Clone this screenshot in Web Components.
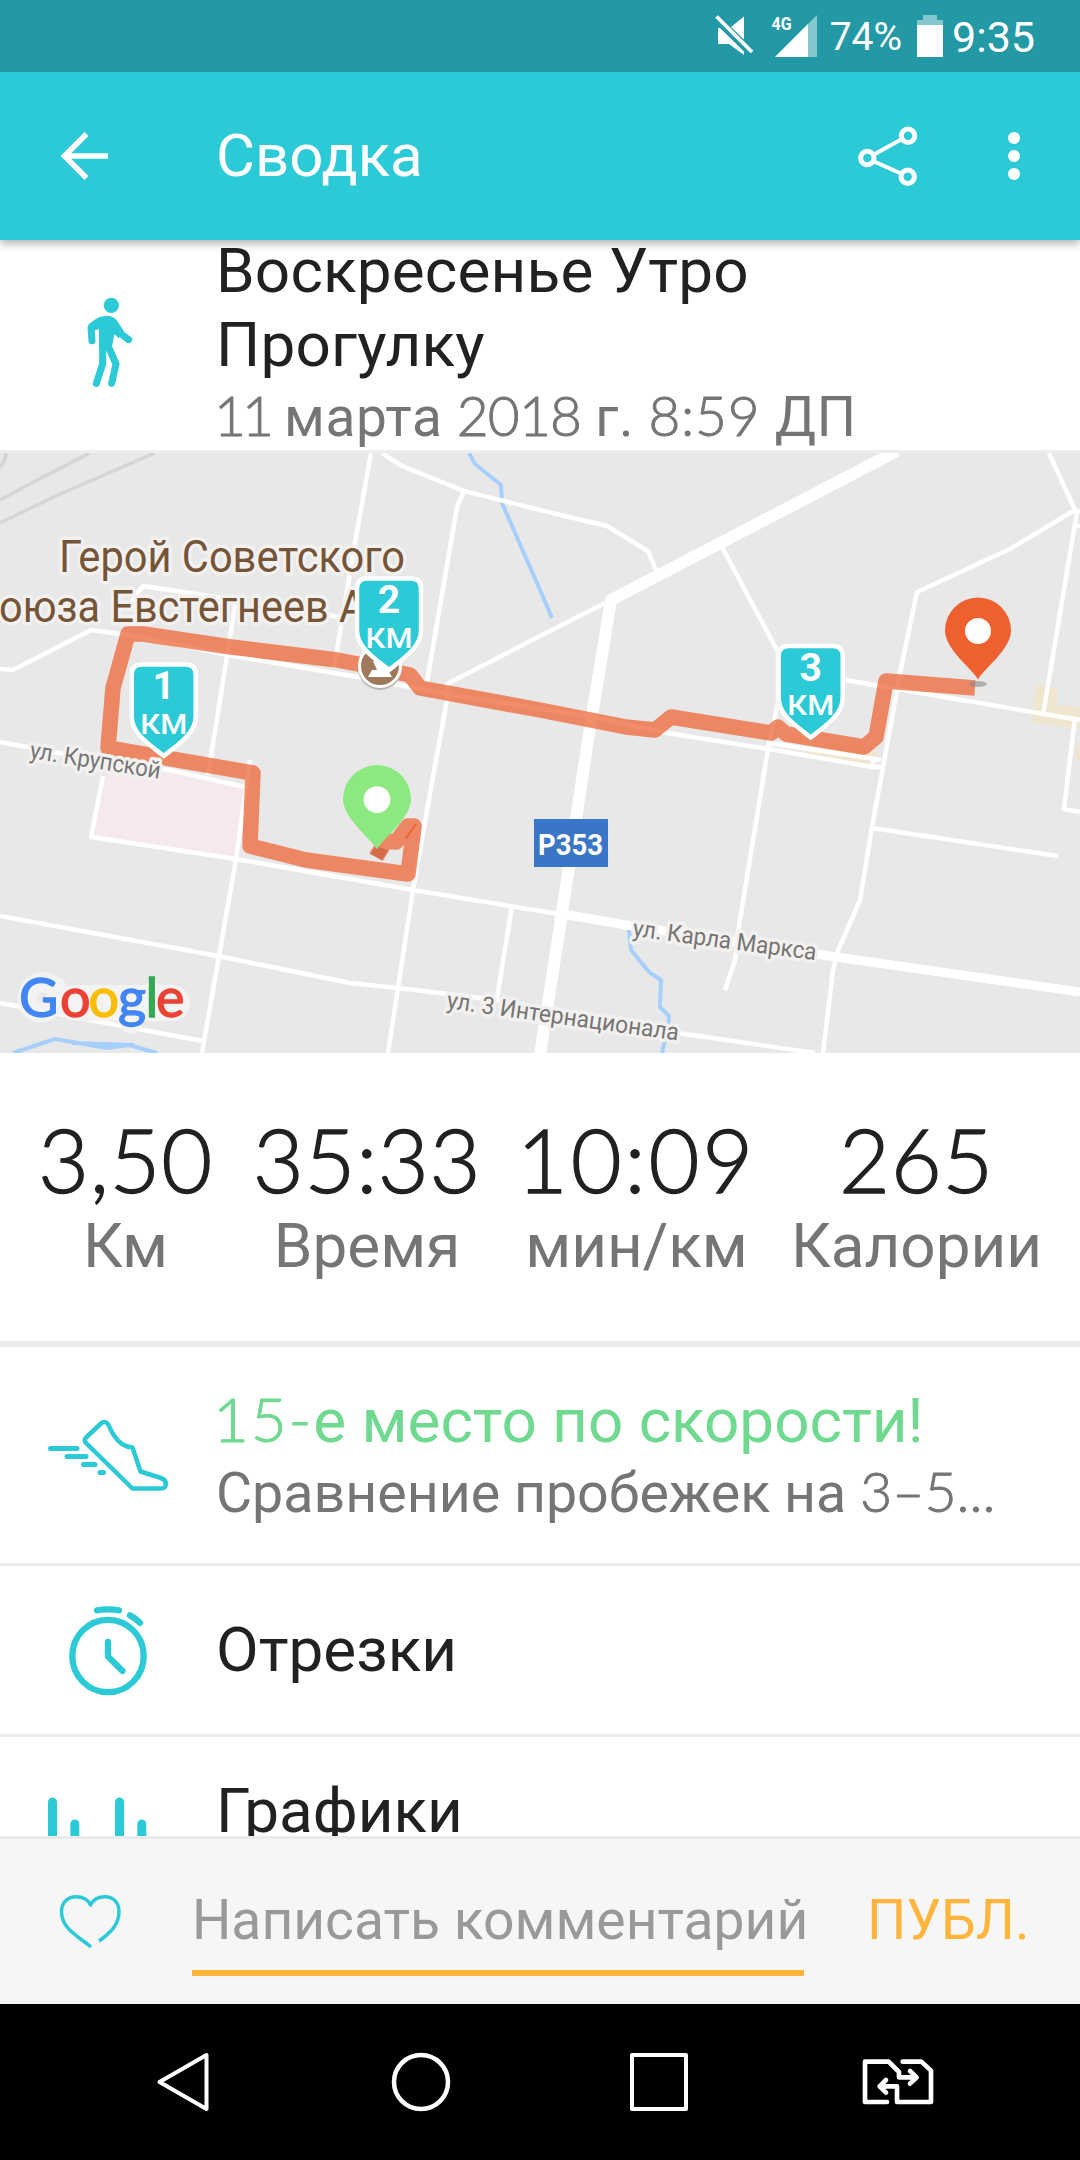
<!DOCTYPE html>
<html lang="ru">
<head>
<meta charset="utf-8">
<title>Сводка</title>
<style>
  body {
    margin: 0;
    width: 1080px;
    height: 2160px;
    overflow: hidden;
    background: white;
    font-family: Roboto, "Noto Sans", sans-serif;
    color: #212121;
  }

  .num {
    font-family: Lato, sans-serif;
    font-weight: 300;
    -webkit-text-stroke: 0.9px currentColor;
  }
</style>
</head>
<body>

<run-screen>
  <status-bar slot="top"></status-bar>
  <app-bar slot="top">Сводка</app-bar>

  <activity-header>
    <span slot="title">Воскресенье Утро Прогулку</span>
    <span slot="date"><span class="num" style="letter-spacing:-4px">11</span> марта <span class="num" style="letter-spacing:-.8px">2018</span> г. <span class="num" style="letter-spacing:.8px">8:59</span> ДП</span>
  </activity-header>
  <route-map></route-map>
  <stats-row>
    <stat-item value="3,50">Км</stat-item>
    <stat-item value="35:33">Время</stat-item>
    <stat-item value="10:09" style="--value-spacing:2.8px">мин/км</stat-item>
    <stat-item value="265">Калории</stat-item>
  </stats-row>

  <list-row icon="shoe" tall accent>
    <span class="num" style="margin-left:-3px;letter-spacing:1.8px">15-</span>е место по скорости!
    <span slot="sub">Сравнение пробежек на <span class="num">3–5...</span></span>
  </list-row>
  <list-row icon="clock">Отрезки</list-row>
  <list-row icon="bars" class="last">Графики</list-row>

  <comment-bar slot="bottom" action="ПУБЛ.">Написать комментарий</comment-bar>
  <nav-bar slot="bottom"></nav-bar>
</run-screen>

<script>
class BaseElement extends HTMLElement {
  constructor() {
    super()
    this.attachShadow({ mode: "open" })
  }

  connectedCallback() {
    this.shadowRoot.innerHTML = this.render()
  }
}

const icons = {
  shoe: /*html*/`
    <svg width="128" height="82" viewBox="0 -4 128 82" fill="none" stroke="#2cc9d6" stroke-width="4.500" stroke-linecap="round" stroke-linejoin="round">
      <path d="M57 5.500 L42 19.500 Q39.500 22 42 25 L88.500 70.500 H117 Q122 70.500 121.800 65.500 Q121.500 61.500 117 60 L96.500 53.500 L88.500 29.500 C79 29 73.500 23 70 17.500 C66 11.500 66 9 63.500 5.500 Q60.500 2.500 57 5.500 Z"/>
      <path d="M6.500 30.500 H33 M23 38.500 H42 M39.500 46.500 H51 M56 54.500 H59.500" stroke-width="5"/>
    </svg>`,
  clock: /*html*/`
    <svg width="80" height="92" viewBox="0 0 80 92" fill="none" stroke="#2cc9d6" stroke-width="6.300" stroke-linecap="round" stroke-linejoin="round">
      <ellipse cx="40" cy="52" rx="35.700" ry="36.200"/>
      <path d="M40 38 V52.500 L54.500 67"/>
      <path d="M29 6.300 Q40 4.600 51 6.300 M62 11.300 Q67.500 14 72 18.800"/>
    </svg>`,
  bars: /*html*/`
    <svg width="120" height="50" viewBox="0 0 120 50" stroke="#2cc9d6" stroke-width="9" stroke-linecap="round">
      <path d="M4.500 6 V44 M26.800 28 V44 M71.500 6 V44 M93.800 28 V44"/>
    </svg>`
}

class RunScreen extends BaseElement {
  render() {
    return /*html*/`
      <style>
        :host {
          display: flex;
          flex-direction: column;
          height: 2160px;
        }
        main {
          flex: 1;
          min-height: 0;
          overflow: hidden;
        }
      </style>
      <slot name="top"></slot>
      <main><slot></slot></main>
      <slot name="bottom"></slot>`
  }
}

class StatusBar extends BaseElement {
  render() {
    return /*html*/`
      <style>
        :host {
          display: flex;
          justify-content: flex-end;
          height: 72px;
          box-sizing: border-box;
          padding-right: 45px;
          background: #2499a6;
          color: white;
          line-height: 72px;
          font-size: 43px;
          z-index: 3;
        }
        .battery {
          font-size: 39px;
          margin: 1px 15px 0 11px;
        }
        .time {
          margin-left: 9px;
          line-height: 74px;
        }
      </style>
      <svg width="106" height="72" viewBox="714 0 106 72" fill="white">
        <path d="M732 27 L745 16.500 V39.500 Z M719 28 H721 L745 51.500 V55 L730 44 H719 Z"/>
        <path d="M717.500 16.500 L753 52" stroke="white" stroke-width="3.800"/>
        <path d="M776 57 L818 15 V57 Z" opacity="0.450"/>
        <path d="M776 57 L809 24 V57 Z"/>
        <text x="772.500" y="30" font-size="18" font-weight="700" textLength="20" lengthAdjust="spacingAndGlyphs">4G</text>
      </svg>
      <span class="battery">74%</span>
      <svg width="26" height="72" viewBox="917 0 26 72" fill="white">
        <path d="M917 25 V20 H923 V15 H937 V20 H943 V25 Z" opacity="0.450"/>
        <rect x="917" y="25" width="26" height="32"/>
      </svg>
      <span class="time">9:35</span>`
  }
}

class AppBar extends BaseElement {
  render() {
    return /*html*/`
      <style>
        :host {
          display: flex;
          align-items: center;
          height: 168px;
          background: #2cc9d6;
          color: white;
          font-size: 60px;
          box-shadow: 0 3px 9px rgba(0, 0, 0, 0.35);
          z-index: 2;
        }
        .back {
          margin-left: 58px;
          width: 156px;
        }
        .label {
          flex: 1;
          padding: 0 0 2px 2px;
        }
        .dots {
          margin: 0 59px 0 90px;
        }
      </style>
      <svg class="back" width="156" height="54" viewBox="0 0 156 54" fill="none" stroke="white" stroke-width="5.500">
        <path d="M50 27 H6 M28.500 5 L6.500 27 L28.500 49"/>
      </svg>
      <span class="label"><slot></slot></span>
      <svg width="60" height="62" viewBox="857 125 60 62" fill="none" stroke="white" stroke-width="5">
        <circle cx="908" cy="135.700" r="6.700"/>
        <circle cx="867.300" cy="158" r="6.700"/>
        <circle cx="907.700" cy="176.700" r="6.700"/>
        <path d="M873 155 L902 139 M873 161 L902 174" stroke-width="4"/>
      </svg>
      <svg class="dots" width="14" height="50" viewBox="0 0 14 50" fill="white">
        <circle cx="7" cy="7" r="6"/>
        <circle cx="7" cy="25" r="6"/>
        <circle cx="7" cy="43" r="6"/>
      </svg>`
  }
}

class ActivityHeader extends BaseElement {
  render() {
    return /*html*/`
      <style>
        :host {
          display: flex;
          height: 210px;
          border-bottom: 3px solid #eeeeee;
        }
        .icon {
          box-sizing: border-box;
          width: 216px;
          flex: none;
          display: flex;
          align-items: center;
          justify-content: center;
          padding: 0 0 10px 3px;
        }
        .text {
          margin-top: -6px;
        }
        .title {
          width: 640px;
          font-size: 62px;
          line-height: 74px;
          letter-spacing: 0.2px;
        }
        .date {
          margin: -1px 0 0 -2px;
          font-size: 55px;
          line-height: 68px;
          letter-spacing: 0.6px;
          color: #757575;
          white-space: nowrap;
        }
      </style>
      <div class="icon">
        <svg width="100" height="120" viewBox="0 0 300 360" fill="none" stroke="#2cc9d6" stroke-width="21" stroke-linecap="round" stroke-linejoin="round">
          <circle cx="154" cy="76" r="23" fill="#2cc9d6" stroke="none"/>
          <path d="M84 135 Q112 108 140 107 C158 107 170 116 178 133 L192 154 L176 175 L163 163 L155 205 H117 V148 L100 152 Z" fill="#2cc9d6" stroke="none"/>
          <path d="M96 182 L93 143 L120 122 M206 179 L176 156 M128 200 V252 L109 310 M143 195 L168 252 L155 310"/>
        </svg>
      </div>
      <div class="text">
        <div class="title"><slot name="title"></slot></div>
        <div class="date"><slot name="date"></slot></div>
      </div>`
  }
}

class RouteMap extends BaseElement {
  shield(x, y, n) {
    return /*html*/`
      <g transform="translate(${x} ${y})" text-anchor="middle" fill="white">
        <path d="M-22 2 H22 Q32 2 32 12 V54 C32 70 17 80 0 93.500 C-17 80 -32 70 -32 54 V12 Q-32 2 -22 2 Z" fill="#2cc9d6" stroke="white" stroke-width="4.500"/>
        <text y="36.500" font-size="39" font-weight="700">${n}</text>
        <text y="71" font-size="27" font-weight="500" textLength="47" lengthAdjust="spacingAndGlyphs">КМ</text>
      </g>`
  }

  pin(x, y, color, scale = 1) {
    return /*html*/`
      <g transform="translate(${x} ${y}) scale(${scale})">
        <path d="M0 0 C-5 -10 -33 -30 -33 -49 A33 33 0 1 1 33 -49 C33 -30 5 -10 0 0 Z" fill="${color}"/>
        <circle cy="-48.500" r="13" fill="white"/>
      </g>`
  }

  // the map canvas keeps page coordinates, it starts at y = 453
  render() {
    return /*html*/`
      <style>
        :host {
          display: block;
          height: 600px;
        }
        svg {
          display: block;
        }
        .halo text {
          paint-order: stroke;
          stroke: #f3f1ef;
          stroke-width: 7px;
          stroke-linejoin: round;
        }
        .logo tspan {
          fill: currentColor;
          stroke: currentColor;
          stroke-width: 1.3px;
        }
      </style>
      <svg width="1080" height="600" viewBox="0 453 1080 600">
        <rect y="453" width="1080" height="600" fill="#e8e8e8"/>
        <path d="M105 775 L160 770 L245 789 L236 858 L91 836 Z" fill="#f6e9ed"/>
        <path d="M808 748 L877 752 L876 766 L808 756 Z M1036 685 L1057 688 V705 L1080 707 V728 L1031 723 Z M1076 745 H1080 V760 H1076 Z" fill="#f0e5cf"/>

        <g fill="none" stroke="#d5d5d5" stroke-width="3.500">
          <path d="M0 500 L45 476 L90 453 M0 523 L60 494 L155 453 M0 467 Q5 462 6 453"/>
        </g>

        <g fill="none" stroke="#a6cffb" stroke-width="4" stroke-linejoin="round">
          <path d="M469 453 L475 464 L501 485 L502 503 L540 590 L552 618"/>
          <path d="M629 930 L631 950 L649 972 L661 980 L660 1007 L669 1016 L668 1027 L662 1053"/>
          <path d="M13 1053 L55 1039 L107 1048 L129 1045 L157 1053 M72 1043 L134 1045"/>
        </g>

        <g fill="none" stroke="white" stroke-width="4.500" stroke-linejoin="round">
          <path d="M371 453 L355 543 L334 668"/>
          <path d="M382 453 L402 466 L464 491 L540 510 L607 526 L648 551 L656 570"/>
          <path d="M464 491 L457 507 L427 682"/>
          <path d="M605 603 L540 636 L447 684 L447 700 L436 760 L413 890 L398 988 L388 1053"/>
          <path d="M0 669 L13 670 L91 630 L128 635 L234 656 L358 677 L410 687 L447 694 L592 717 L667 733 L769 749 L872 767 H883"/>
          <path d="M128 606 L143 586 L236 600 L208 775 M327 615 L345 618"/>
          <path d="M0 742 L64 754 L160 768 L245 787"/>
          <path d="M103 776 L91 837 L236 859 L413 890 L540 911 L561 914"/>
          <path d="M250 760 L236 859 L219 956 L202 1053"/>
          <path d="M0 916 L218 956 L350 983 L398 988 L497 1000 L678 1033 L815 1053"/>
          <path d="M0 1003 L202 1041 M512 906 L497 998"/>
          <path d="M722 547 L778 652 V703 L769 743 L738 932 L735 960 L725 990"/>
          <path d="M769 743 L881 760 M873 758 V767"/>
          <path d="M780 668 L879 686 L1080 720"/>
          <path d="M1049 453 L1075 510 L1010 549 L917 592 L900 673 L884 762 L872 827 L860 900 L837 953 L833 970 L823 1053"/>
          <path d="M1075 510 L1080 512 M1077 512 L1043 715 M1075 526 H1080"/>
          <path d="M872 828 L1058 856 M1075 718 L1064 809 L1080 812"/>
        </g>
        <path d="M897 451 L611 600 L588 740 L562 913 L540 1055" fill="none" stroke="white" stroke-width="12" stroke-linejoin="round"/>
        <path d="M562 914 L626 925 L836 957 L1080 992" fill="none" stroke="white" stroke-width="9"/>

        <path d="M376 857 L386 841 L396 842 L408 826 L414 826 L408 874 L306 860 L250 846 L253 773 L108 748 L113 688 L128 634 L143 634 L231 647 L337 660 L358 664 L410 675 L420 688 L540 710 L626 727 L655 730 L671 717 L771 733 L778 727 L786 734 L864 747 L876 737 L886 681 L975 688" fill="none" stroke="#ee602f" stroke-width="15.500" stroke-linejoin="round" opacity="0.720"/>

        <g class="halo" fill="#765437" font-size="45">
          <text x="59" y="572" textLength="346" lengthAdjust="spacingAndGlyphs">Герой Советского</text>
          <text x="-1" y="622" textLength="367" lengthAdjust="spacingAndGlyphs">оюза Евстегнеев А</text>
        </g>
        <g class="halo" fill="#757575" font-size="24">
          <text transform="translate(29 758) rotate(9)" textLength="132" lengthAdjust="spacingAndGlyphs">ул. Крупской</text>
          <text transform="translate(632 936) rotate(7.500)" textLength="185" lengthAdjust="spacingAndGlyphs">ул. Карла Маркса</text>
          <text transform="translate(446 1008) rotate(8)" textLength="234" lengthAdjust="spacingAndGlyphs">ул. 3 Интернационала</text>
        </g>

        <rect x="534" y="819" width="74" height="48" fill="#3a76c8"/>
        <text x="538" y="855" font-size="29" font-weight="700" fill="white" textLength="65" lengthAdjust="spacingAndGlyphs">Р353</text>

        <circle cx="380" cy="668" r="22" fill="#b9b4b0"/>
        <circle cx="380" cy="666" r="20.500" fill="#a0785c" stroke="white" stroke-width="3"/>
        <path d="M368 677 L372 670 H377 L373 661 L389 664 L388 670 L392 677 Z" fill="white"/>

        <ellipse cx="978" cy="684" rx="9" ry="3" fill="#8a8a8a" opacity="0.600"/>
        <path d="M370 854 L376 846 L388 850 L382 860 Z" fill="#c55a3c" opacity="0.600"/>
        <path d="M416 824 L406 838" stroke="#ee602f" stroke-width="2"/>
        ${this.shield(163.7, 662.5, 1)}
        ${this.shield(389, 576.5, 2)}
        ${this.shield(810.7, 644, 3)}
        ${this.pin(978, 679.5, "#ef602f")}
        ${this.pin(377, 849.5, "#8be97f", 1.03)}

        <path d="M56 987 C35 975 26 990 28 1002 C31 1016 50 1016 54 1002 M75 1003 H172 M131 1020 V1024 M152 992 V1012" fill="none" stroke="#f3f3f3" stroke-width="20" stroke-linecap="round"/>
        <path d="M75 1003 H172" stroke="#f3f3f3" stroke-width="36" stroke-linecap="round"/>
        <g class="logo" font-family="Lato, sans-serif" font-size="54" font-weight="400">
          <text y="1017"><tspan x="19" color="#4285f4">G</tspan><tspan x="60" color="#ea4335">o</tspan><tspan x="88.500" color="#fbbc05">o</tspan><tspan x="118" color="#4285f4">g</tspan><tspan x="145.500" color="#34a853">l</tspan><tspan x="156" color="#ea4335">e</tspan></text>
        </g>
      </svg>`
  }
}

class StatsRow extends BaseElement {
  render() {
    return /*html*/`
      <style>
        :host {
          display: grid;
          grid-template-columns: 175px 230px 231px 251px;
          justify-content: space-between;
          box-sizing: border-box;
          height: 294px;
          padding: 56px 38px 0;
          border-bottom: 6px solid #eeeeee;
        }
      </style>
      <slot></slot>`
  }
}

class StatItem extends BaseElement {
  render() {
    return /*html*/`
      <style>
        :host {
          display: flex;
          flex-direction: column;
          align-items: center;
          white-space: nowrap;
        }
        .value {
          font: 300 88px/100px Lato, sans-serif;
          letter-spacing: var(--value-spacing, 0.6px);
          -webkit-text-stroke: 1.3px currentColor;
        }
        .label {
          font-size: 62px;
          line-height: 74px;
          color: #757575;
        }
      </style>
      <div class="value">${this.getAttribute("value")}</div>
      <div class="label"><slot></slot></div>`
  }
}

class ListRow extends BaseElement {
  render() {
    return /*html*/`
      <style>
        :host {
          display: flex;
          align-items: center;
          height: 168px;
          border-bottom: 3px solid #eeeeee;
          font-size: 62px;
          line-height: 74px;
          white-space: nowrap;
        }
        :host([tall]) {
          height: 216px;
        }
        :host([accent]) .main {
          color: #6fd98f;
        }
        :host(.last) .main {
          margin-bottom: 20px;
        }
        .icon {
          width: 216px;
          display: flex;
          justify-content: center;
        }
        .sub {
          margin: -1px 0 1px;
          font-size: 55.5px;
          line-height: 68px;
          color: #757575;
        }
      </style>
      <div class="icon">${icons[this.getAttribute("icon")]}</div>
      <div>
        <div class="main"><slot></slot></div>
        ${this.hasAttribute("tall") ? `<div class="sub"><slot name="sub"></slot></div>` : ""}
      </div>`
  }
}

class CommentBar extends BaseElement {
  render() {
    return /*html*/`
      <style>
        :host {
          display: flex;
          box-sizing: border-box;
          height: 168px;
          border-top: 3px solid #ebebeb;
          background: #f6f6f6;
          font-size: 55.2px;
          line-height: 66px;
          white-space: nowrap;
        }
        .heart {
          margin: 53px 69px 0 57px;
        }
        .field {
          box-sizing: border-box;
          width: 612px;
          height: 137px;
          padding-top: 48px;
          border-bottom: 6px solid #ffb53c;
          color: #999999;
        }
        .action {
          margin: 48px 0 0 63px;
          color: #ffb53c;
        }
      </style>
      <svg class="heart" width="66" height="60" viewBox="57 1892 66 60" fill="none" stroke="#2cc9d6" stroke-width="3.500" stroke-linejoin="round">
        <path d="M91 1947 C78 1936 61.500 1929 61.500 1911.500 C61.500 1901 69 1896.800 76 1896.800 C83 1896.800 88 1900 90.500 1905 C93 1900 98 1896.800 105 1896.800 C112 1896.800 119 1901 119 1911.500 C119 1925 110 1933 99 1941"/>
      </svg>
      <div class="field"><slot></slot></div>
      <div class="action">${this.getAttribute("action")}</div>`
  }
}

class NavBar extends BaseElement {
  render() {
    return /*html*/`
      <style>
        :host {
          display: grid;
          grid-template-columns: 62px 64px 64px 74px;
          column-gap: 174px;
          align-items: center;
          box-sizing: border-box;
          height: 156px;
          padding-left: 153px;
          background: black;
        }
        .sim {
          margin-left: -4px;
        }
      </style>
      <svg width="60" height="64" viewBox="0 0 60 64" fill="none" stroke="white" stroke-width="4" stroke-linejoin="round">
        <path d="M53.500 5 V59 L6.500 32 Z"/>
      </svg>
      <svg width="64" height="64" viewBox="0 0 64 64" fill="none" stroke="white" stroke-width="4.500">
        <circle cx="32" cy="32" r="27"/>
      </svg>
      <svg width="64" height="64" viewBox="0 0 64 64" fill="none" stroke="white" stroke-width="4" stroke-linejoin="round">
        <rect x="5" y="5" width="54" height="54"/>
      </svg>
      <svg class="sim" width="74" height="50" viewBox="60 81 222 150" fill="none" stroke="white" stroke-width="14" stroke-linecap="round" stroke-linejoin="round">
        <path d="M138 216 H72 V95 H143 L174 126 V142 H226 M207 123 L227 142 L207 161"/>
        <path d="M185 95 H241 L270 122 V216 H168 V169 H116 M135 150 L116 169 L135 188"/>
      </svg>`
  }
}

customElements.define("run-screen", RunScreen)
customElements.define("status-bar", StatusBar)
customElements.define("app-bar", AppBar)
customElements.define("activity-header", ActivityHeader)
customElements.define("route-map", RouteMap)
customElements.define("stats-row", StatsRow)
customElements.define("stat-item", StatItem)
customElements.define("list-row", ListRow)
customElements.define("comment-bar", CommentBar)
customElements.define("nav-bar", NavBar)
</script>
</body>
</html>
